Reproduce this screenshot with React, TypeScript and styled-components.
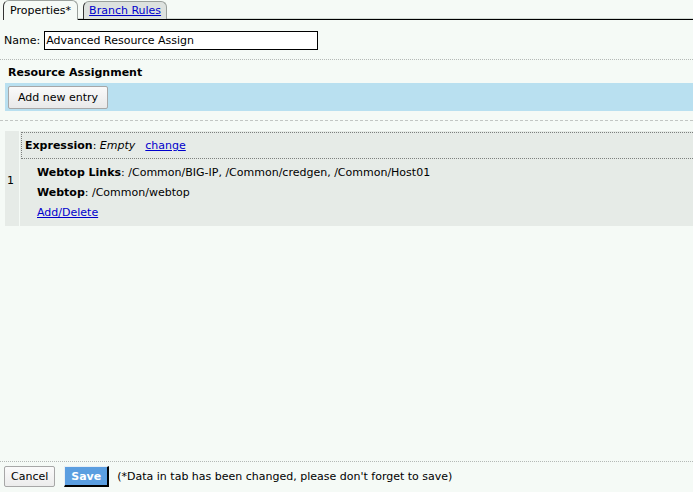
import React from 'react';
import styled, { createGlobalStyle } from 'styled-components';

const GlobalStyle = createGlobalStyle`
  html, body {
    margin: 0;
    padding: 0;
    background: #f5faf6;
  }
  body {
    font-family: "DejaVu Sans", Verdana, sans-serif;
    font-size: 11px;
    color: #000;
  }
`;

const Page = styled.div`
  display: flex;
  flex-direction: column;
  min-height: 100vh;
`;

const TabBar = styled.div`
  display: flex;
  align-items: flex-end;
  gap: 5px;
  height: 19px;
  margin-left: 3px;
  border-bottom: 1px solid #000;
  box-shadow: inset 0 -1px 0 #d3dad5;
`;

const Tab = styled.div<{ $active?: boolean }>`
  height: ${({ $active }) => ($active ? '20px' : '18px')};
  box-sizing: border-box;
  display: flex;
  align-items: center;
  padding: 0 ${({ $active }) => ($active ? '6px' : '5px')};
  border: 1px solid #9aa09c;
  border-left-color: #333;
  border-bottom: none;
  border-radius: 6px 6px 0 0;
  background: ${({ $active }) => ($active ? '#f5faf6' : '#dde2df')};
  margin-bottom: ${({ $active }) => ($active ? '-1px' : '0')};
`;

const TabLink = styled.a`
  color: #0000cc;
  text-decoration: underline;
`;

const NameRow = styled.div`
  display: flex;
  align-items: center;
  gap: 4px;
  padding: 11px 4px 9px;
  border-bottom: 1px dotted #b4b9b6;
`;

const NameInput = styled.input`
  width: 274px;
  height: 19px;
  box-sizing: border-box;
  border: 1px solid #000;
  padding: 0 1px;
  font-family: inherit;
  font-size: 11px;
  background: #fff;
  outline: none;
`;

const SectionTitle = styled.div`
  font-weight: bold;
  padding: 6px 8px 4px;
  line-height: 13px;
`;

const ActionBand = styled.div`
  margin-left: 5px;
  height: 28px;
  display: flex;
  align-items: center;
  padding-left: 3px;
  background: #b9e0f0;
`;

const PlainButton = styled.button`
  height: 23px;
  padding: 0 9px;
  font-family: inherit;
  font-size: 11px;
  color: #000;
  background: linear-gradient(#fafafa, #e9e9e9);
  border: 1px solid #a7a7a7;
  border-radius: 2px;
`;

const DashedRule = styled.div`
  margin-top: 9px;
  height: 0;
  border-top: 1px dashed #c2c6c3;
`;

const EntryPanel = styled.div`
  display: grid;
  grid-template-columns: 14px 1fr;
  column-gap: 1px;
  margin: 10px 0 0 5px;
`;

const EntryNumber = styled.div`
  background: #e6ebe7;
  display: flex;
  align-items: center;
  padding-left: 2px;
  padding-top: 3px;
`;

const EntryBody = styled.div`
  background: #e6ebe7;
  padding: 1px 0 3px 1px;
`;

const ExpressionBox = styled.div`
  height: 27px;
  box-sizing: border-box;
  display: flex;
  align-items: center;
  gap: 4px;
  padding-left: 3px;
  border: 1px dotted #7d807e;
  border-right: none;
`;

const Strong = styled.b`
  font-weight: bold;
`;

const Em = styled.i`
  margin-right: 6px;
`;

const TextLink = styled.a`
  color: #0000cc;
  text-decoration: underline;
  cursor: pointer;
`;

const Details = styled.div`
  display: flex;
  flex-direction: column;
  padding: 4px 0 0 16px;
  line-height: 20px;
`;

const Footer = styled.div`
  margin-top: auto;
  display: flex;
  align-items: center;
  gap: 9px;
  padding: 4px 4px 5px;
  border-top: 1px dotted #b4b9b6;
`;

const CancelButton = styled(PlainButton)`
  height: 21px;
  padding: 0 6px;
  background: linear-gradient(#fbfbfb, #ececec);
`;

const SaveButton = styled.button`
  height: 21px;
  padding: 0 6px;
  font-family: inherit;
  font-size: 11px;
  font-weight: bold;
  color: #fff;
  background: #5b9ee0;
  border: 1px solid #e8eef4;
  border-right: 2px solid #000;
  border-bottom: 2px solid #000;
`;

const Note = styled.span`
  margin-left: -1px;
`;

const App: React.FC = () => {
  return (
    <Page>
      <GlobalStyle />
      <TabBar>
        <Tab $active>Properties*</Tab>
        <Tab>
          <TabLink>Branch Rules</TabLink>
        </Tab>
      </TabBar>

      <NameRow>
        <span>Name:</span>
        <NameInput defaultValue="Advanced Resource Assign" />
      </NameRow>

      <SectionTitle>Resource Assignment</SectionTitle>
      <ActionBand>
        <PlainButton>Add new entry</PlainButton>
      </ActionBand>
      <DashedRule />

      <EntryPanel>
        <EntryNumber>1</EntryNumber>
        <EntryBody>
          <ExpressionBox>
            <span>
              <Strong>Expression</Strong>: <Em>Empty</Em>
            </span>
            <TextLink>change</TextLink>
          </ExpressionBox>
          <Details>
            <div>
              <Strong>Webtop Links</Strong>: /Common/BIG-IP, /Common/credgen, /Common/Host01
            </div>
            <div>
              <Strong>Webtop</Strong>: /Common/webtop
            </div>
            <div>
              <TextLink>Add/Delete</TextLink>
            </div>
          </Details>
        </EntryBody>
      </EntryPanel>

      <Footer>
        <CancelButton>Cancel</CancelButton>
        <SaveButton>Save</SaveButton>
        <Note>(*Data in tab has been changed, please don't forget to save)</Note>
      </Footer>
    </Page>
  );
};

export default App;
